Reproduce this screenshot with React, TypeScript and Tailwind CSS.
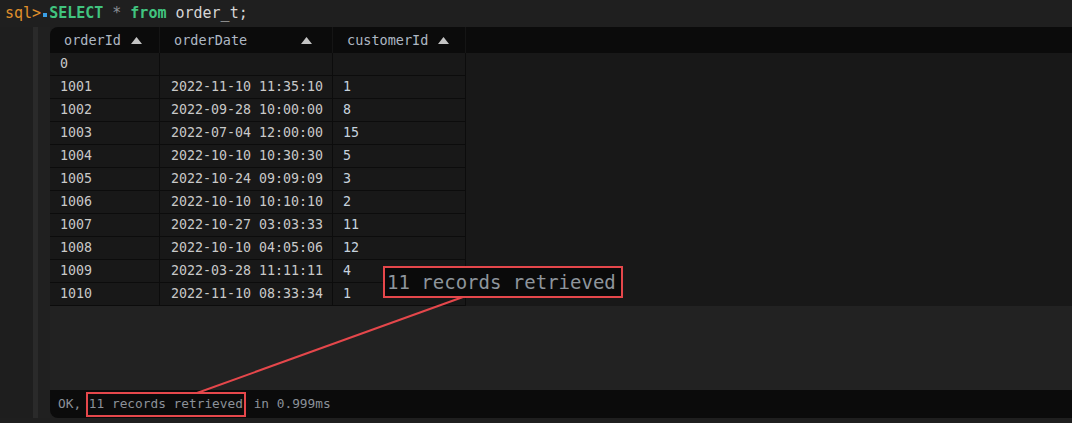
import React from "react";

const rows: [string, string, string][] = [
  ["0", "", ""],
  ["1001", "2022-11-10 11:35:10", "1"],
  ["1002", "2022-09-28 10:00:00", "8"],
  ["1003", "2022-07-04 12:00:00", "15"],
  ["1004", "2022-10-10 10:30:30", "5"],
  ["1005", "2022-10-24 09:09:09", "3"],
  ["1006", "2022-10-10 10:10:10", "2"],
  ["1007", "2022-10-27 03:03:33", "11"],
  ["1008", "2022-10-10 04:05:06", "12"],
  ["1009", "2022-03-28 11:11:11", "4"],
  ["1010", "2022-11-10 08:33:34", "1"],
];

const mono = { fontFamily: "'DejaVu Sans Mono', 'Liberation Mono', monospace" };

function Tri() {
  return (
    <svg width="11" height="7" viewBox="0 0 11 7" className="shrink-0">
      <polygon points="5.5,0 11,7 0,7" fill="#c4c4c4" />
    </svg>
  );
}

export default function App() {
  return (
    <div
      className="relative w-[1072px] h-[423px] bg-[#1f1f1f] flex flex-col overflow-hidden"
      style={mono}
    >
      {/* command line */}
      <div className="h-[27px] flex items-center pl-[5px] text-[15px] leading-none">
        <span className="text-[#e0902c]">sql&gt;</span>
        <span className="w-[4px] h-[4px] bg-[#3a9ee6] mx-[2px] mt-[2px]" />
        <span className="text-[#41c47f] font-bold">SELECT</span>
        <span className="text-[#8a8f96] ml-[9px]">*</span>
        <span className="text-[#41c47f] font-bold ml-[9px]">from</span>
        <span className="text-[#d6d6d6] ml-[9px]">order_t;</span>
      </div>

      <div className="flex h-[391px]">
        <div className="w-[33px] bg-[#1e1e1e]" />
        <div className="w-[5px] bg-[#2a2a2a]" />
        <div className="w-[12px] bg-[#202020]" />

        {/* result panel */}
        <div className="flex-1 flex flex-col rounded-l-[8px] overflow-hidden">
          {/* header */}
          <div className="h-[26px] bg-[#0b0b0b] flex text-[13.5px] text-[#aeb8c4] shrink-0">
            <div className="w-[110px] flex items-center pl-[14px] gap-[10px] border-r border-[#151515]">
              <span>orderId</span>
              <Tri />
            </div>
            <div className="w-[173px] flex items-center pl-[14px] pr-[20px] justify-between border-r border-[#151515]">
              <span>orderDate</span>
              <Tri />
            </div>
            <div className="w-[133px] flex items-center pl-[14px] gap-[10px] border-r border-[#151515]">
              <span>customerId</span>
              <Tri />
            </div>
            <div className="flex-1" />
          </div>

          {/* body */}
          <div className="h-[253px] bg-[#181818] shrink-0">
            <div className="w-[416px] border-r border-[#0c0c0c]">
              {rows.map((r, i) => (
                <div
                  key={i}
                  className="flex h-[23px] border-b border-[#0c0c0c] text-[13.3px] text-[#c9c9c9]"
                >
                  <div className="w-[110px] pl-[10px] flex items-center border-r border-[#0c0c0c]">
                    {r[0]}
                  </div>
                  <div className="w-[173px] pl-[11px] flex items-center border-r border-[#0c0c0c]">
                    {r[1]}
                  </div>
                  <div className="flex-1 pl-[10px] flex items-center text-[#c6d2de]">
                    {r[2]}
                  </div>
                </div>
              ))}
            </div>
          </div>

          <div className="h-[84px] bg-[#222222] shrink-0" />

          {/* status */}
          <div className="h-[28px] bg-[#0b0b0b] flex items-center pl-[8px] text-[12.8px] text-[#8b9199] shrink-0">
            <span>OK,&nbsp;</span>
            <span className="border-2 border-[#e5474b] h-[25px] flex items-center px-[1px] -ml-[3px]">
              11 records retrieved
            </span>
            <span>&nbsp;in 0.999ms</span>
          </div>
        </div>
      </div>

      {/* annotation */}
      <svg
        className="absolute left-0 top-0 pointer-events-none"
        width="1072"
        height="423"
      >
        <line x1="463" y1="297" x2="197" y2="393" stroke="#e5474b" strokeWidth="2" />
      </svg>
      <div className="absolute left-[383px] top-[266px] w-[240px] h-[32px] border-2 border-[#e5474b] bg-[#0a0a0a] flex items-center pl-[2px] text-[19px] text-[#8e959c] leading-none">
        11 records retrieved
      </div>
    </div>
  );
}
